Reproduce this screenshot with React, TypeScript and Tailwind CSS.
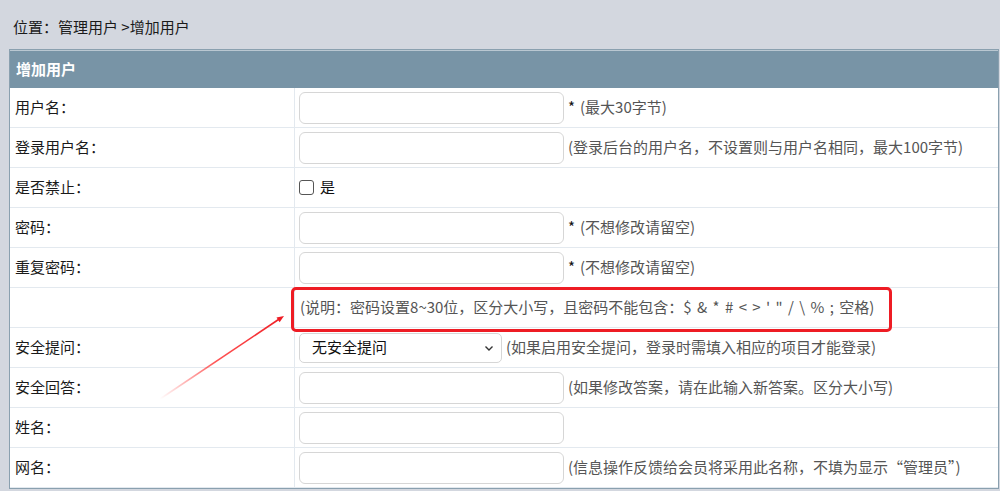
import React from 'react';

const font = { fontFamily: '"Noto Sans CJK SC", "Noto Sans", sans-serif' };

type Row = {
  label: string;
  kind: 'input' | 'checkbox' | 'select' | 'note';
  star?: boolean;
  hint?: string;
};

const rows: Row[] = [
  { label: '用户名：', kind: 'input', star: true, hint: '(最大30字节)' },
  { label: '登录用户名：', kind: 'input', hint: '(登录后台的用户名，不设置则与用户名相同，最大100字节)' },
  { label: '是否禁止：', kind: 'checkbox' },
  { label: '密码：', kind: 'input', star: true, hint: '(不想修改请留空)' },
  { label: '重复密码：', kind: 'input', star: true, hint: '(不想修改请留空)' },
  { label: '', kind: 'note' },
  { label: '安全提问：', kind: 'select', hint: '(如果启用安全提问，登录时需填入相应的项目才能登录)' },
  { label: '安全回答：', kind: 'input', hint: '(如果修改答案，请在此输入新答案。区分大小写)' },
  { label: '姓名：', kind: 'input' },
  { label: '网名：', kind: 'input', hint: '(信息操作反馈给会员将采用此名称，不填为显示“管理员”)' },
];

const TextBox = () => (
  <div className="w-[265px] h-[32px] rounded-[6px] border border-[#d6d6d6] bg-white shrink-0" />
);

const Cell: React.FC<{ row: Row }> = ({ row }) => {
  switch (row.kind) {
    case 'checkbox':
      return (
        <div className="flex items-center gap-[6px]">
          <div className="w-[15px] h-[15px] rounded-[3px] border border-[#555] bg-white" />
          <span className="text-[#111]">是</span>
        </div>
      );
    case 'select':
      return (
        <div className="flex items-center">
          <div className="w-[203px] h-[30px] rounded-[5px] border border-[#d6d6d6] bg-white flex items-center justify-between pl-[12px] pr-[6px] text-[#111]">
            <span>无安全提问</span>
            <svg width="12" height="12" viewBox="0 0 12 12" fill="none">
              <path d="M2.5 4.5 L6 8 L9.5 4.5" stroke="#333" strokeWidth="1.4" />
            </svg>
          </div>
          <span className="ml-[4px] text-[#555]">{row.hint}</span>
        </div>
      );
    case 'note':
      return (
        <span className="text-[#555] pl-[1px] [word-spacing:2px]">
          (说明：密码设置8~30位，区分大小写，且密码不能包含：$ &amp; * # &lt; &gt; ' " / \ % ; 空格)
        </span>
      );
    default:
      return (
        <div className="flex items-center">
          <TextBox />
          {row.star && <span className="ml-[4px] text-[#111]">*</span>}
          {row.hint && <span className={`${row.star ? 'ml-[5px]' : 'ml-[4px]'} text-[#555]`}>{row.hint}</span>}
        </div>
      );
  }
};

export default function App() {
  return (
    <div className="relative w-[1000px] h-[491px] overflow-hidden bg-[#d3d7df] text-[15px]" style={font}>
      <div className="h-[49px] flex items-center pl-[13px] pt-[6px] text-[#1a1a1a]">位置：管理用户 &gt;增加用户</div>

      <div className="ml-[9px] mr-[1px] border border-[#8aa0af] bg-white">
        <div className="h-[38px] bg-[#7894a6] border-t border-[#b9c7d1] flex items-center pl-[6px] text-white font-bold">
          增加用户
        </div>
        {rows.map((row, i) => (
          <div key={i} className="grid grid-cols-[285px_1fr] h-[40px] border-b border-[#e3e9ef]">
            <div className="flex items-center pl-[5px] border-r border-[#e3e9ef] text-[#1a1a1a]">{row.label}</div>
            <div className="flex items-center pl-[4px]">
              <Cell row={row} />
            </div>
          </div>
        ))}
      </div>

      {/* annotation box */}
      <div className="absolute left-[291px] top-[287px] w-[601px] h-[45px] border-[3px] border-[#ee1c24] rounded-[5px]" />

      {/* annotation arrow */}
      <svg className="absolute left-0 top-0" width="1000" height="491" viewBox="0 0 1000 491">
        <defs>
          <linearGradient id="arr" x1="160" y1="399" x2="284" y2="316" gradientUnits="userSpaceOnUse">
            <stop offset="0" stopColor="#ff3b3b" stopOpacity="0" />
            <stop offset="0.45" stopColor="#ff2a2a" stopOpacity="0.8" />
            <stop offset="1" stopColor="#ee1c24" stopOpacity="1" />
          </linearGradient>
        </defs>
        <path d="M160 399 L280 318.5" stroke="url(#arr)" strokeWidth="1.6" />
        <path d="M284 316 L276.5 317.6 L279.6 322.2 Z" fill="#ee1c24" />
      </svg>
    </div>
  );
}
